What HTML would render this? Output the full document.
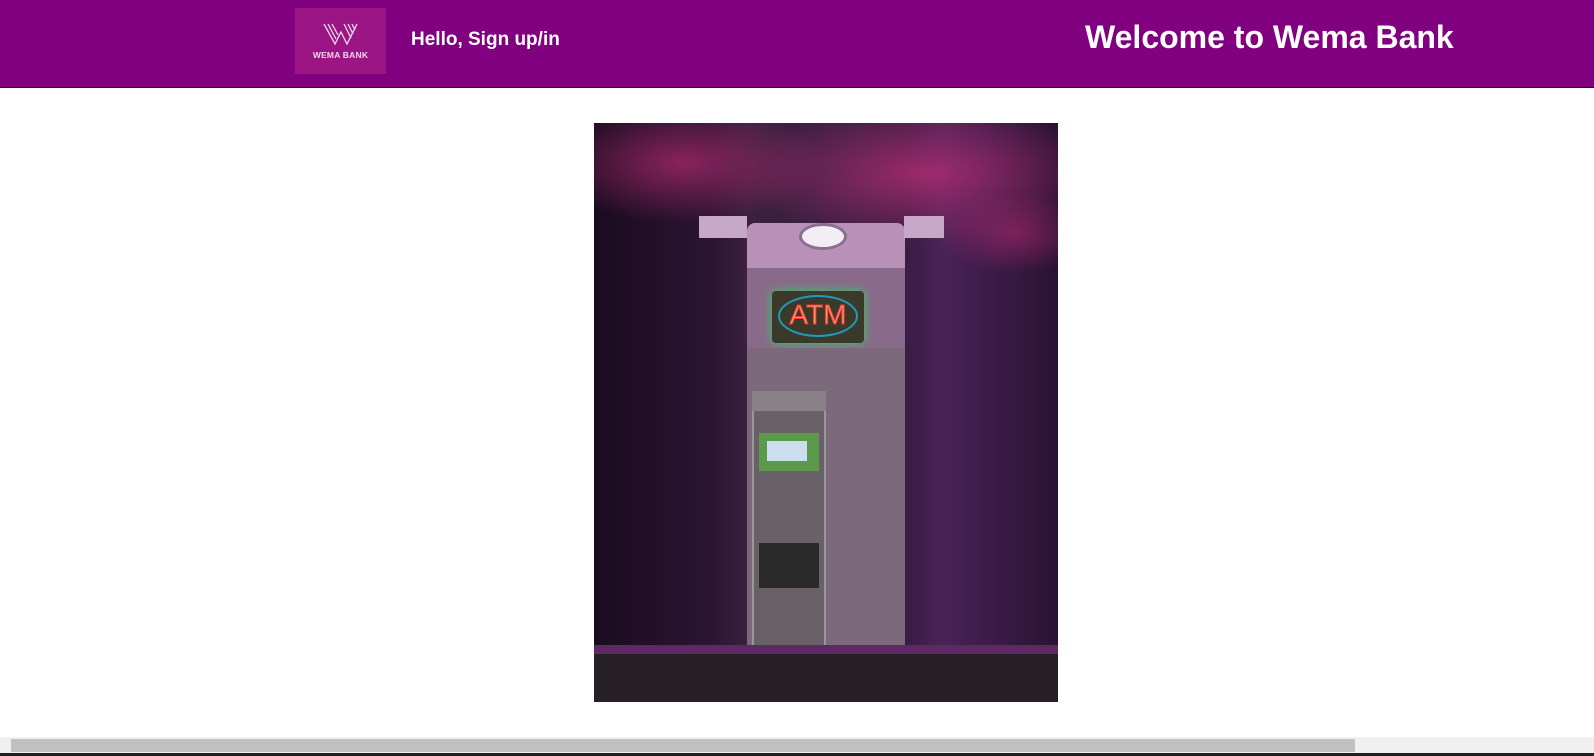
<!DOCTYPE html>
<html><head><style>
*{margin:0;padding:0;box-sizing:border-box}
body{width:1594px;height:756px;overflow:hidden;background:#fff;font-family:"Liberation Sans",sans-serif;position:relative}
.hdr{position:absolute;left:0;top:0;width:1594px;height:88px;background:#800080;border-bottom:1px solid #2a0a2a}
.logo{position:absolute;left:295px;top:8px;width:91px;height:66px;background:#9b1585}
.logo span{position:absolute;left:0;width:91px;top:42px;text-align:center;color:#f0d8ec;font:bold 8.5px "Liberation Sans",sans-serif;letter-spacing:.2px}
.hello{position:absolute;left:411px;top:29px;color:#fff;font-weight:bold;font-size:19px}
.wel{position:absolute;left:1085px;top:19px;color:#fff;font-weight:bold;font-size:32px}
.ph{position:absolute;left:594px;top:123px;width:464px;height:579px;overflow:hidden;background:linear-gradient(90deg,#1a0c20 0%,#2a1432 25%,#3b2040 33%,#3a1d44 68%,#4a2258 75%,#2a1232 100%)}
.ph div{position:absolute}
.sb{position:absolute;left:0;top:737px;width:1594px;height:16px;background:#f0f0f0}
.th{position:absolute;left:11px;top:739px;width:1344px;height:13px;background:#c0c0c0}
.bot{position:absolute;left:0;top:753px;width:1594px;height:3px;background:#222}
</style></head><body>
<div class="hdr">
<div class="logo">
<svg width="91" height="42" viewBox="0 0 91 42" style="position:absolute;left:0;top:0"><g stroke="#f0d8ec" stroke-width="1.3" fill="none"><path d="M29 16 L40 36 L46 24 L52 36 L62 16"/><path d="M33 16 L41 31 M37 16 L43 27 M49 16 L56 30 M53 16 L58 26 M57 16 L60 22"/></g></svg>
<span>WEMA BANK</span></div>
<div class="hello">Hello, Sign up/in</div>
<div class="wel">Welcome to Wema Bank</div>
</div>
<div class="ph">
<div style="left:0;top:0;width:464px;height:160px;background:radial-gradient(ellipse 140px 60px at 90px 40px,rgba(170,40,110,.75),transparent),radial-gradient(ellipse 180px 70px at 330px 50px,rgba(180,45,115,.8),transparent),radial-gradient(ellipse 80px 40px at 420px 110px,rgba(170,40,110,.6),transparent)"></div>
<div style="left:153px;top:100px;width:158px;height:45px;background:#b890b8;border-radius:8px 8px 0 0"></div>
<div style="left:205px;top:100px;width:48px;height:27px;background:#f4eef4;border-radius:50%;border:3px solid #8a7090"></div>
<div style="left:105px;top:93px;width:48px;height:22px;background:#c8a8c8"></div>
<div style="left:310px;top:93px;width:40px;height:22px;background:#c8a8c8"></div>
<div style="left:153px;top:145px;width:158px;height:80px;background:#8a6a8a"></div>
<div style="left:178px;top:168px;width:92px;height:52px;background:#3a3a2a;border-radius:4px;box-shadow:0 0 10px #3c6"></div>
<div style="left:184px;top:172px;width:80px;height:42px;border:2px solid #29b;border-radius:50%"></div>
<div style="left:178px;top:176px;width:92px;text-align:center;font:28px 'Liberation Sans',sans-serif;color:#f96;-webkit-text-stroke:1px #e33">ATM</div>
<div style="left:153px;top:225px;width:158px;height:300px;background:#7c6a7c"></div>
<div style="left:158px;top:268px;width:74px;height:258px;background:#6a6068;border:2px solid #999"></div>
<div style="left:158px;top:268px;width:74px;height:20px;background:#8a8088"></div>
<div style="left:165px;top:310px;width:60px;height:38px;background:#5a9a4a"></div>
<div style="left:173px;top:318px;width:40px;height:20px;background:#cde"></div>
<div style="left:165px;top:420px;width:60px;height:45px;background:#2a2a2a"></div>
<div style="left:0;top:522px;width:464px;height:9px;background:#5a2a60"></div>
<div style="left:0;top:531px;width:464px;height:48px;background:#262026"></div>
</div>
<div class="sb"></div><div class="th"></div><div class="bot"></div>
</body></html>
